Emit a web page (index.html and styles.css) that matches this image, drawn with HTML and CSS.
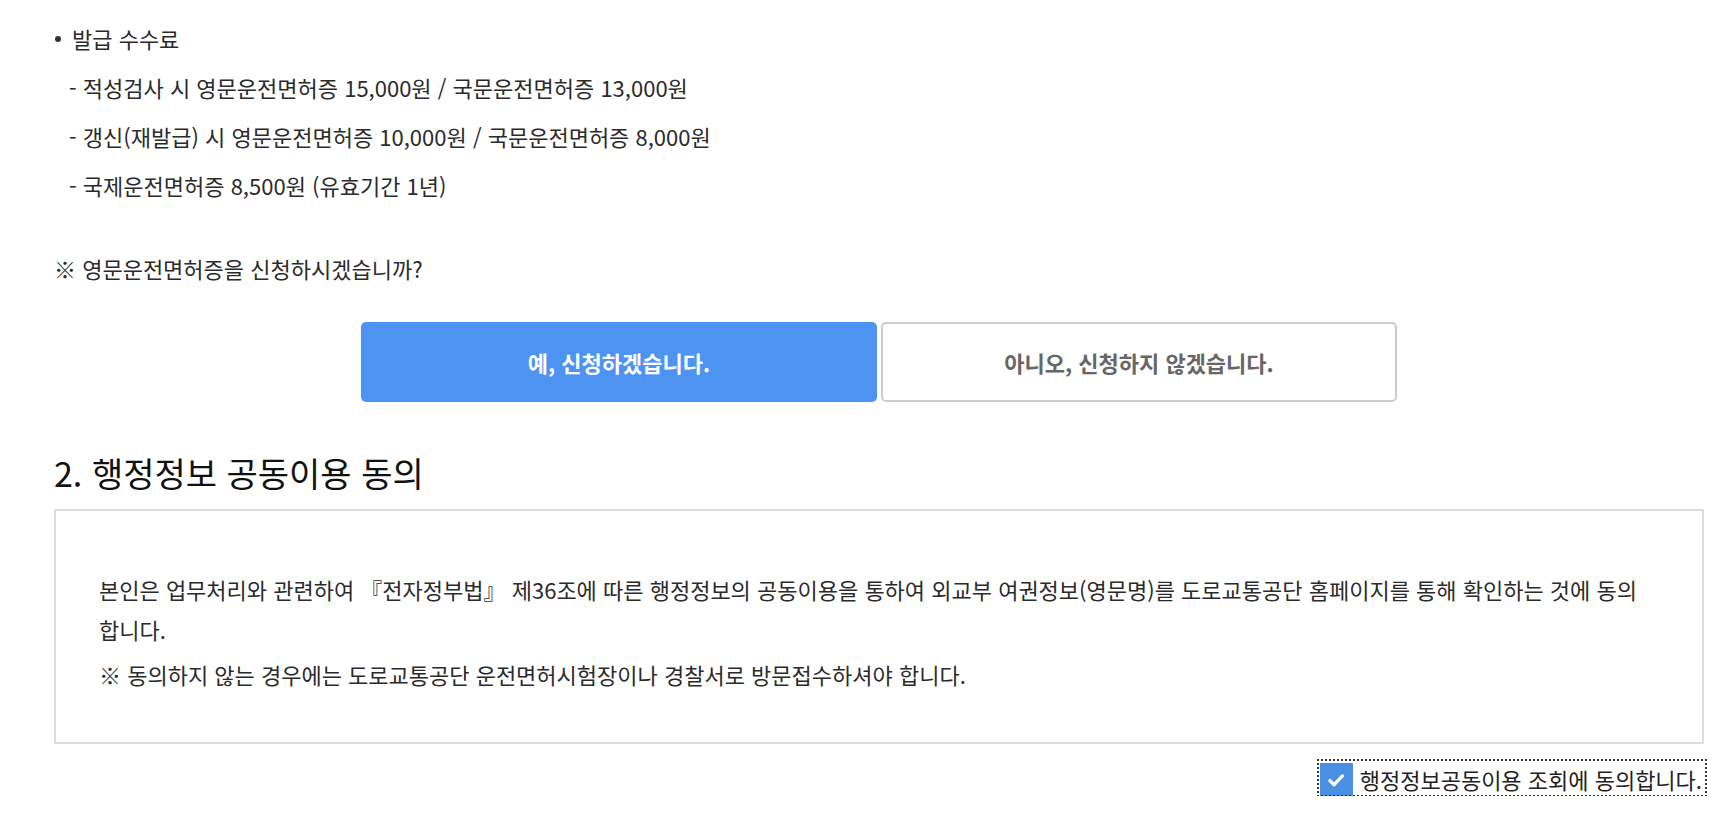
FILE: index.html
```html
<!DOCTYPE html>
<html lang="ko">
<head>
<meta charset="utf-8">
<title>영문운전면허증 신청</title>
<link rel="stylesheet" href="styles.css">
</head>
<body>
<div class="wrap">
  <div class="fees">
    <p class="fee-title">발급 수수료</p>
    <p class="fee-line">- 적성검사 시 영문운전면허증 15,000원 / 국문운전면허증 13,000원</p>
    <p class="fee-line">- 갱신(재발급) 시 영문운전면허증 10,000원 / 국문운전면허증 8,000원</p>
    <p class="fee-line">- 국제운전면허증 8,500원 (유효기간 1년)</p>
  </div>
  <p class="question">※ 영문운전면허증을 신청하시겠습니까?</p>
  <div class="btns">
    <button class="btn btn-yes" type="button">예, 신청하겠습니다.</button>
    <button class="btn btn-no" type="button">아니오, 신청하지 않겠습니다.</button>
  </div>
  <h2 class="sec-title">2. 행정정보 공동이용 동의</h2>
  <div class="agree-box">
    <p class="agree-text">본인은 업무처리와 관련하여 『전자정부법』 제36조에 따른 행정정보의 공동이용을 통하여 외교부 여권정보(영문명)를 도로교통공단 홈페이지를 통해 확인하는 것에 동의합니다.</p>
    <p class="agree-text">※ 동의하지 않는 경우에는 도로교통공단 운전면허시험장이나 경찰서로 방문접수하셔야 합니다.</p>
  </div>
  <div class="check-row">
    <label class="check">
      <span class="check-box"><svg viewBox="0 0 20 20" width="20" height="20"><path d="M4.5 10.5l3.8 3.8 7.5-8" fill="none" stroke="#fff" stroke-width="3" stroke-linecap="round" stroke-linejoin="round"/></svg></span>
      <span class="check-label">행정정보공동이용 조회에 동의합니다.</span>
    </label>
  </div>
</div>
</body>
</html>
```
FILE: styles.css
```css
html, body {
  margin: 0;
  padding: 0;
  background: #fff;
}
body {
  font-family: "Noto Sans CJK KR", "Noto Sans", sans-serif;
  color: #2b2b2b;
  font-size: 22px;
}
p { margin: 0; }
.wrap {
  display: flex;
  flex-direction: column;
  padding: 14px 22px 0 54px;
}
.fees {
  display: flex;
  flex-direction: column;
}
.fee-title, .fee-line {
  line-height: 49px;
}
.fee-title {
  display: flex;
  align-items: center;
}
.fee-title::before {
  content: "";
  width: 6px;
  height: 6px;
  border-radius: 50%;
  background: #333;
  margin: 0 11px 0 1px;
}
.fee-line {
  padding-left: 15px;
}
.question {
  margin-top: 34px;
  line-height: 49px;
}
.btns {
  display: flex;
  justify-content: center;
  gap: 4px;
  margin-top: 29px;
}
.btn {
  width: 516px;
  height: 80px;
  border-radius: 5px;
  font-family: inherit;
  font-size: 22px;
  font-weight: 700;
  cursor: pointer;
}
.btn-yes {
  background: #4d94f2;
  border: 0;
  color: #fff;
}
.btn-no {
  background: #fff;
  border: 2px solid #cccccc;
  color: #666;
}
.sec-title {
  margin: 49px 0 0;
  font-size: 34px;
  font-weight: 400;
  line-height: 44px;
  color: #111;
}
.agree-box {
  margin-top: 14px;
  border: 2px solid #dddddd;
  padding: 58px 62px 48px 43px;
  display: flex;
  flex-direction: column;
  gap: 5px;
}
.agree-text {
  line-height: 40px;
}
.check-row {
  display: flex;
  justify-content: flex-end;
  margin-top: 16px;
}
.check {
  display: flex;
  align-items: center;
  gap: 7px;
  padding: 3px 4px 0 2px;
  outline: 2px dotted #333;
  outline-offset: -1px;
  margin-right: -2px;
}
.check-box {
  width: 33px;
  height: 33px;
  background: #4a90e2;
  display: flex;
  align-items: center;
  justify-content: center;
}
.check-box svg {
  width: 22px;
  height: 22px;
}
.check-label {
  font-size: 22px;
  color: #222;
  line-height: 33px;
}
```
